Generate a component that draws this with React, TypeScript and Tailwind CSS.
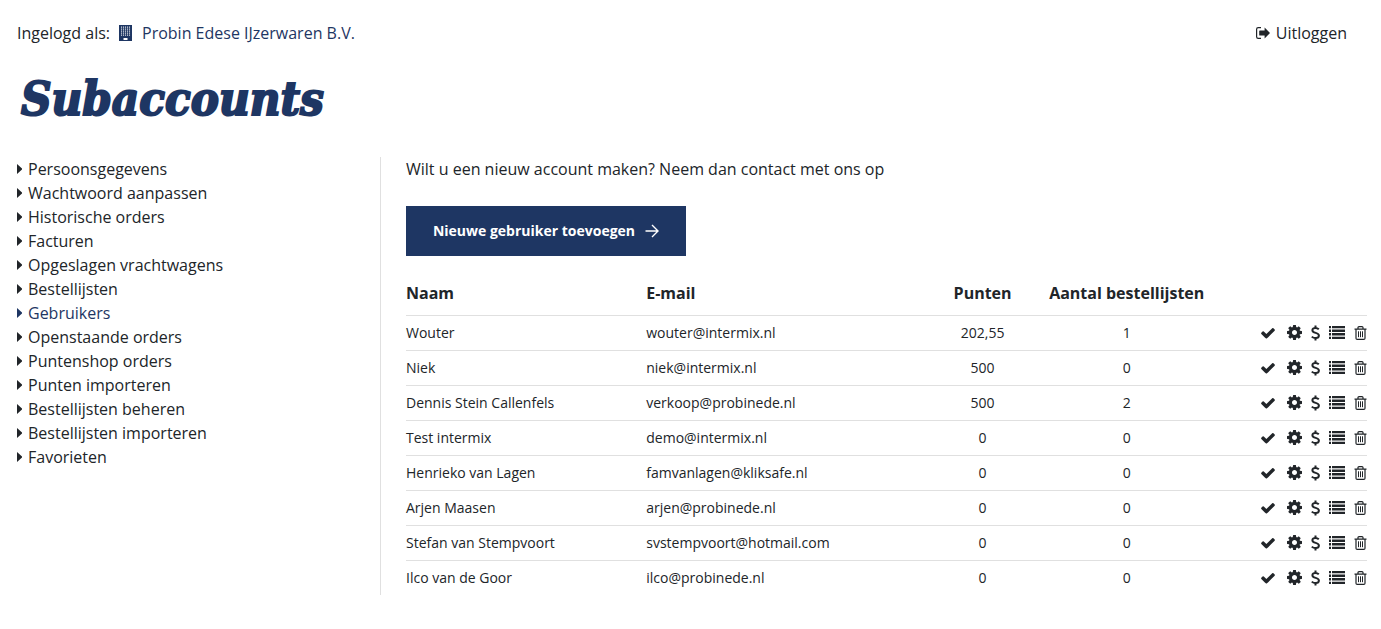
import type { ReactNode } from 'react';

interface Account {
  name: string;
  email: string;
  points: string;
  lists: number;
}

const menuItems = [
  'Persoonsgegevens',
  'Wachtwoord aanpassen',
  'Historische orders',
  'Facturen',
  'Opgeslagen vrachtwagens',
  'Bestellijsten',
  'Gebruikers',
  'Openstaande orders',
  'Puntenshop orders',
  'Punten importeren',
  'Bestellijsten beheren',
  'Bestellijsten importeren',
  'Favorieten',
];

const accounts: Account[] = [
  { name: 'Wouter', email: 'wouter@intermix.nl', points: '202,55', lists: 1 },
  { name: 'Niek', email: 'niek@intermix.nl', points: '500', lists: 0 },
  { name: 'Dennis Stein Callenfels', email: 'verkoop@probinede.nl', points: '500', lists: 2 },
  { name: 'Test intermix', email: 'demo@intermix.nl', points: '0', lists: 0 },
  { name: 'Henrieko van Lagen', email: 'famvanlagen@kliksafe.nl', points: '0', lists: 0 },
  { name: 'Arjen Maasen', email: 'arjen@probinede.nl', points: '0', lists: 0 },
  { name: 'Stefan van Stempvoort', email: 'svstempvoort@hotmail.com', points: '0', lists: 0 },
  { name: 'Ilco van de Goor', email: 'ilco@probinede.nl', points: '0', lists: 0 },
];

function BuildingIcon() {
  return (
    <svg viewBox="0 0 13 16" className="h-4 w-[13px]" aria-hidden="true">
      <path d="M0 0h13v16H0z" fill="currentColor" />
      <path
        d="M2.5 1.5v10M4.5 1.5v10M6.5 1.5v10M8.5 1.5v10M10.5 1.5v10"
        stroke="#fff"
        strokeWidth="1.1"
        strokeDasharray="1.2 .8"
        opacity=".85"
      />
      <path d="M4.5 13h4v2h-4z" fill="#fff" />
    </svg>
  );
}

function SignOutIcon() {
  return (
    <svg viewBox="0 0 14 12" className="h-3 w-3.5" fill="none" aria-hidden="true">
      <path d="M5 .6H2.2Q.6.6.6 2.2v7.6q0 1.6 1.6 1.6H5" stroke="currentColor" strokeWidth="1.2" />
      <path d="M8.6.4 14 6l-5.4 5.6V8.6H3.8q-.6 0-.6-.6V4q0-.6.6-.6h4.8z" fill="currentColor" />
    </svg>
  );
}

function CheckIcon() {
  return (
    <svg viewBox="0 0 1792 1792" className="h-4 w-5" fill="currentColor" aria-hidden="true">
      <path d="M1671 566q0 40-28 68l-724 724-136 136q-28 28-68 28t-68-28l-136-136-362-362q-28-28-28-68t28-68l136-136q28-28 68-28t68 28l294 295 656-657q28-28 68-28t68 28l136 136q28 28 28 68z" />
    </svg>
  );
}

function CogIcon() {
  return (
    <svg viewBox="128 128 1536 1536" className="size-[15px]" fill="currentColor" aria-hidden="true">
      <path d="M1152 896q0-106-75-181t-181-75-181 75-75 181 75 181 181 75 181-75 75-181zm512-109v222q0 12-8 23t-20 13l-185 28q-19 54-39 91 35 50 107 138 10 12 10 25t-9 23q-27 37-99 108t-94 71q-12 0-26-9l-138-108q-44 23-91 38-16 136-29 186-7 28-36 28h-222q-14 0-24.5-8.5t-11.5-21.5l-28-184q-49-16-90-37l-141 107q-10 9-25 9-14 0-25-11-126-114-165-168-7-10-7-23 0-12 8-23 15-21 51-66.5t54-70.5q-27-50-41-99l-183-27q-13-2-21-12.5t-8-23.5v-222q0-12 8-23t19-13l186-28q14-46 39-92-40-57-107-138-10-12-10-24 0-10 9-23 26-36 98.5-107.5t94.5-71.5q13 0 26 10l138 107q44-23 91-38 16-136 29-186 7-28 36-28h222q14 0 24.5 8.5t11.5 21.5l28 184q49 16 90 37l142-107q9-9 24-9 13 0 25 10 129 119 165 170 7 8 7 22 0 12-8 23-15 21-51 66.5t-54 70.5q26 50 41 98l183 28q13 2 21 12.5t8 23.5z" />
    </svg>
  );
}

function DollarIcon() {
  return (
    <svg viewBox="0 0 9 16" className="h-4 w-[9px]" fill="none" stroke="currentColor" aria-hidden="true">
      <path d="M4.5.5v2.3M4.5 13.2v2.3" strokeWidth="2" />
      <path d="M7.8 4.2C6.8 3.3 5.7 2.9 4.5 2.9 2.6 2.9 1.4 3.8 1.4 5.2c0 3.4 6.5 2 6.5 5.3 0 1.6-1.3 2.6-3.3 2.6-1.5 0-2.8-.5-3.8-1.5" strokeWidth="2" />
    </svg>
  );
}

function ListIcon() {
  return (
    <svg viewBox="0 0 16 13" className="h-[13px] w-4" fill="currentColor" aria-hidden="true">
      <path d="M0 0h2v2.3H0zM0 3.6h2v2.3H0zM0 7.1h2v2.3H0zM0 10.7h2V13H0zM3 0h13v2.3H3zM3 3.6h13v2.3H3zM3 7.1h13v2.3H3zM3 10.7h13V13H3z" />
    </svg>
  );
}

function TrashIcon() {
  return (
    <svg viewBox="0 0 13 14" className="h-3.5 w-[13px]" fill="none" stroke="currentColor" aria-hidden="true">
      <path d="M.5 3.2h12M4 3V1.6q0-1 1-1h3q1 0 1 1V3M2 3.5v8.7q0 1.2 1.2 1.2h6.6q1.2 0 1.2-1.2V3.5" strokeWidth="1.2" />
      <path d="M4.5 5.3v5.9M6.5 5.3v5.9M8.5 5.3v5.9" />
    </svg>
  );
}

function ActionButton({ label, children }: { label: string; children: ReactNode }) {
  return (
    <button type="button" aria-label={label} className="cursor-pointer">
      {children}
    </button>
  );
}

export default function App() {
  return (
    <div className="bg-white pt-5 pr-3.5 pb-8 pl-[17px] font-['Open_Sans',sans-serif] text-base leading-6 text-[#212529]">
      <header className="flex items-center justify-between pt-px pr-5">
        <div className="flex items-center">
          <span>Ingelogd als:</span>
          <a href="#account" className="ml-[9px] flex items-center gap-2.5 text-[#1e3663]">
            <BuildingIcon />
            Probin Edese IJzerwaren B.V.
          </a>
        </div>
        <a href="#uitloggen" className="flex items-center gap-1.5">
          <SignOutIcon />
          Uitloggen
        </a>
      </header>

      <h1 className="mt-6 pl-1 font-['DejaVu_Serif_Condensed','DejaVu_Serif',serif] text-[47px] leading-[60px] font-bold text-[#1e3663] italic [-webkit-text-stroke:2px_#1e3663] [font-stretch:condensed]">
        Subaccounts
      </h1>

      <div className="mt-7 flex">
        <nav className="w-91 shrink-0 border-r border-[#e0e0e0]">
          <ul>
            {menuItems.map((item) => (
              <li key={item}>
                <a href="#menu" className={`flex items-center gap-1.5 ${item === 'Gebruikers' ? 'text-[#1e3663]' : ''}`}>
                  <svg viewBox="0 0 5 10" className="h-2.5 w-[5px]" fill="currentColor" aria-hidden="true">
                    <path d="M0 0 5.5 5 0 10z" />
                  </svg>
                  {item}
                </a>
              </li>
            ))}
          </ul>
        </nav>

        <main className="min-w-0 flex-1 pl-[25px]">
          <p>Wilt u een nieuw account maken? Neem dan contact met ons op</p>

          <button
            type="button"
            className="mt-[25px] flex h-[50px] w-[280px] items-center justify-center gap-2.5 bg-[#1e3663] text-sm font-bold text-white"
          >
            Nieuwe gebruiker toevoegen
            <svg viewBox="0 0 14 14" className="size-3.5" fill="none" stroke="currentColor" strokeWidth="1.4" aria-hidden="true">
              <path d="M.5 7h12.3M7 1l6 6-6 6" />
            </svg>
          </button>

          <table className="mt-4 w-full table-fixed text-sm">
            <thead>
              <tr className="h-[43px] border-b border-[#e0e0e0] text-base font-semibold">
                <th className="w-[25%] text-left">Naam</th>
                <th className="w-[29%] text-left">E-mail</th>
                <th className="w-[12%] text-center">Punten</th>
                <th className="w-[18%] text-center">Aantal bestellijsten</th>
                <th aria-label="Acties" />
              </tr>
            </thead>
            <tbody>
              {accounts.map((account) => (
                <tr key={account.email} className="h-[35px] border-b border-[#e0e0e0] last:border-b-0">
                  <td>{account.name}</td>
                  <td>{account.email}</td>
                  <td className="text-center">{account.points}</td>
                  <td className="text-center">{account.lists}</td>
                  <td>
                    <div className="flex items-center justify-end gap-[9px]">
                      <ActionButton label="Activeren">
                        <CheckIcon />
                      </ActionButton>
                      <ActionButton label="Instellingen">
                        <CogIcon />
                      </ActionButton>
                      <ActionButton label="Punten">
                        <DollarIcon />
                      </ActionButton>
                      <ActionButton label="Bestellijsten">
                        <ListIcon />
                      </ActionButton>
                      <ActionButton label="Verwijderen">
                        <TrashIcon />
                      </ActionButton>
                    </div>
                  </td>
                </tr>
              ))}
            </tbody>
          </table>
        </main>
      </div>
    </div>
  );
}
